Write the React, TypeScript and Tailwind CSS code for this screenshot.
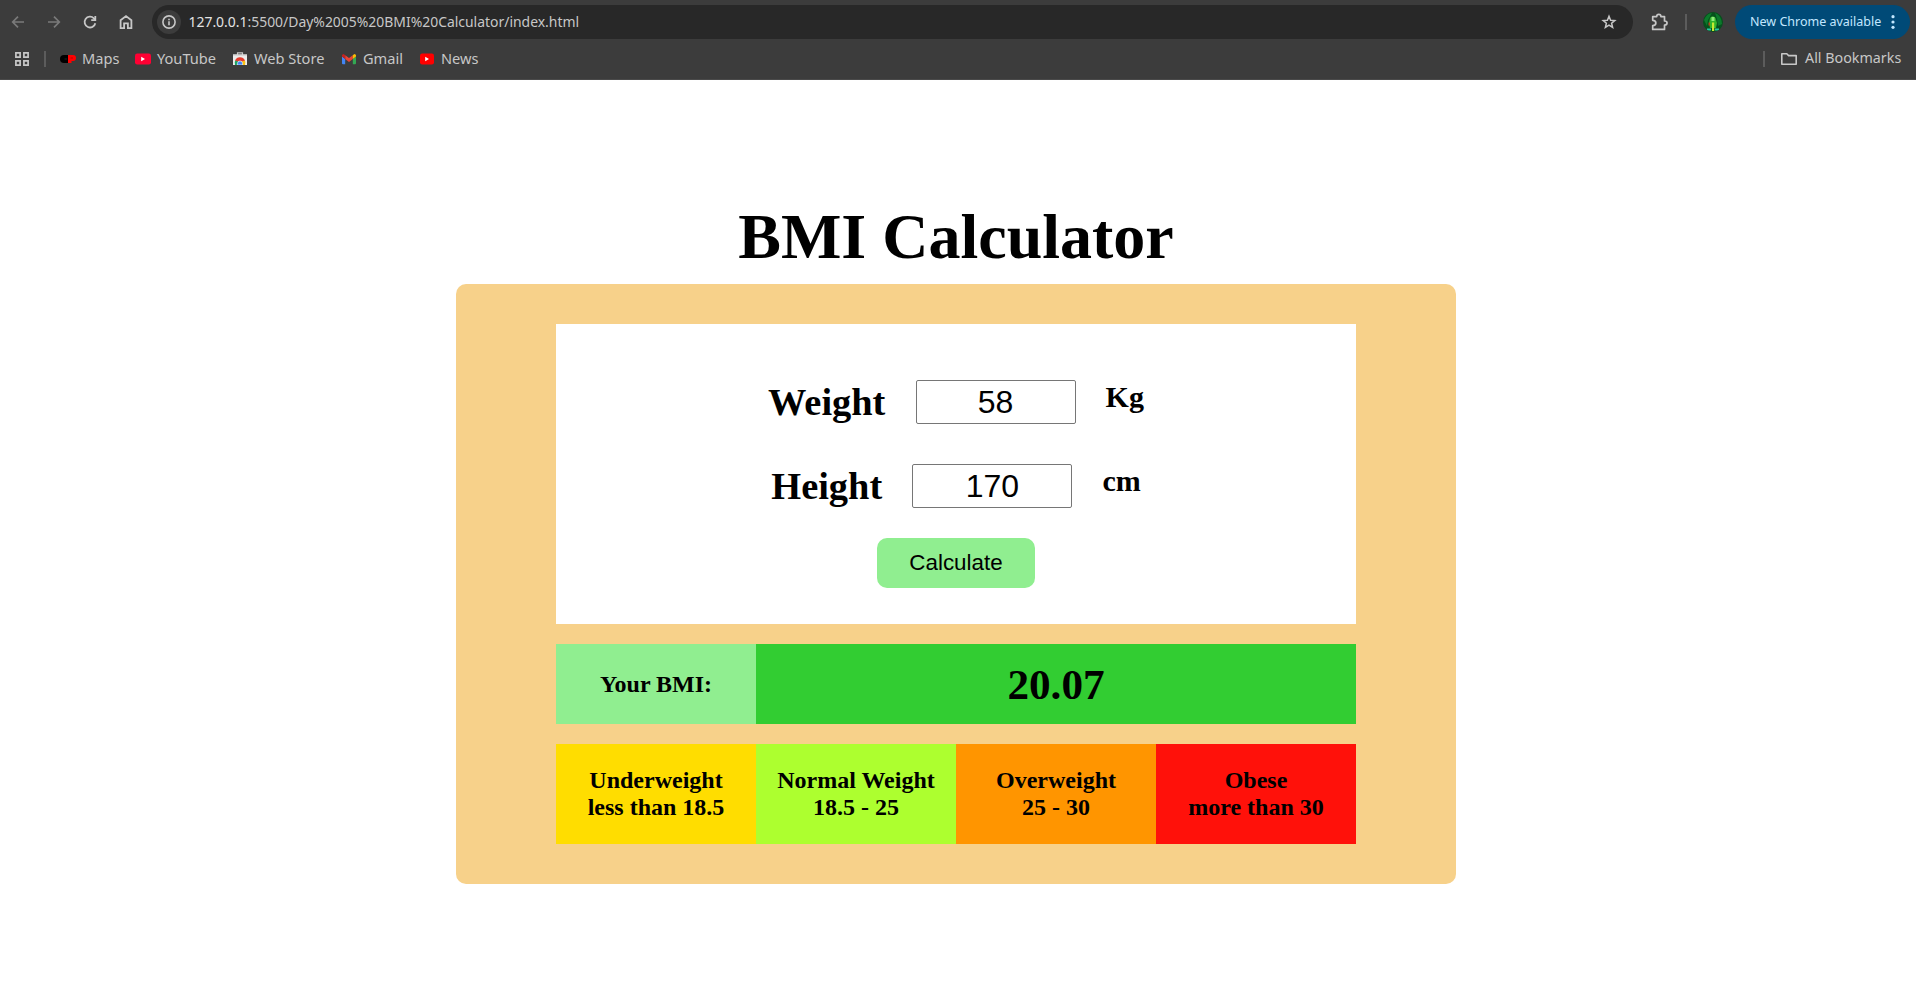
import type { ReactNode } from 'react';

function Stroke({ size, children, className = '', width = 1.7 }: { size: number; children: ReactNode; className?: string; width?: number }) {
  return (
    <svg width={size} height={size} viewBox={`0 0 ${size} ${size}`} fill="none" stroke="currentColor" strokeWidth={width} className={`shrink-0 ${className}`}>
      {children}
    </svg>
  );
}

function YouTubeIcon({ color, w = 16 }: { color: string; w?: number }) {
  return (
    <svg width="16" height="16" viewBox="0 0 16 16" className="shrink-0">
      <rect x={(16 - w) / 2} y="2.5" width={w} height="11" rx="2.2" fill={color} />
      <path d="M6.2 5.8v4.4L10 8z" fill="#fff" />
    </svg>
  );
}

function MapsIcon() {
  return (
    <svg width="16" height="16" viewBox="0 0 16 16" className="shrink-0">
      <path d="M4 4H8V12H4A4 4 0 0 1 4 4z" fill="#000" />
      <path d="M8 4H13A2.8 2.8 0 0 1 13 10H11.5V12H8z" fill="#f00" />
      <path d="M4.5 8H7" stroke="#2a2a2a" strokeWidth=".8" />
      <path d="M10.5 7H13" stroke="#a00" strokeWidth=".8" />
    </svg>
  );
}

function StoreIcon() {
  return (
    <svg width="16" height="16" viewBox="0 0 16 16" className="shrink-0">
      <path d="M5.5 4V1.8h5V4" fill="none" stroke="#c8c8c8" strokeWidth="1.2" />
      <path d="M1 3.5h14V14H1z" fill="#ececec" />
      <path d="M1 3.5h14v1.2H1z" fill="#d2d2d2" />
      <path d="M3 14A5 5 0 0 1 3.6 9L8 11v3z" fill="#1fa463" />
      <path d="M13 14A5 5 0 0 0 12.6 9L8 10v4z" fill="#fbc116" />
      <path d="M3 9.5A5.4 5.4 0 0 1 13 9.5L8 11z" fill="#e33b2e" />
      <path d="M5.4 14V12.6A2.6 2.6 0 0 1 10.6 12.6V14z" fill="#4285f4" stroke="#fff" strokeWidth=".6" />
      <path d="M1 14h14v2H1z" fill="#3c3c3c" />
    </svg>
  );
}

function GmailIcon() {
  return (
    <svg width="16" height="16" viewBox="0 0 16 16" className="shrink-0">
      <path d="M1 5.5L4.2 8V13.3H2a1 1 0 0 1-1-1z" fill="#4285f4" />
      <path d="M15 5.5L11.8 8V13.3H14a1 1 0 0 0 1-1z" fill="#34a853" />
      <path d="M4.2 4.2L8 7.1L11.8 4.2V8L8 10.9L4.2 8z" fill="#ea4335" />
      <path d="M1 4.2A1.4 1.4 0 0 1 3.3 3.4L4.2 4.2V8L1 5.6z" fill="#c5221f" />
      <path d="M15 4.2A1.4 1.4 0 0 0 12.7 3.4L11.8 4.2V8L15 5.6z" fill="#fbbc04" />
    </svg>
  );
}

function Avatar() {
  return (
    <svg width="20" height="20" viewBox="0 0 20 20" className="shrink-0">
      <defs>
        <clipPath id="avatar-clip"><circle cx="10" cy="10" r="10" /></clipPath>
      </defs>
      <g clipPath="url(#avatar-clip)">
        <rect width="20" height="20" fill="#06501c" />
        <path d="M1 8Q4 1 9 1L5 8L4 14zM12 1Q19 4 19 12L15 14L14 7z" fill="#0b7a2b" />
        <path d="M7 6Q9.5 2.5 12.5 6L14 11L13 16H7L6 11z" fill="#2fb32c" />
        <path d="M8.5 5h3v4h-3z" fill="#8eea78" />
        <path d="M5.5 10.5h1.5v3H5.5z" fill="#b4451c" />
        <path d="M9 10.5h2.2v8.5H9z" fill="#c5e832" />
        <path d="M4 16.5h4v2H4zM12 16.5h4v2H12z" fill="#25c9a0" />
      </g>
    </svg>
  );
}

function Bookmark({ icon, label, className }: { icon: ReactNode; label: string; className: string }) {
  return (
    <div className={`flex shrink-0 items-center gap-1.5 ${className}`}>
      {icon}
      <span className="pb-0.5">{label}</span>
    </div>
  );
}

function BrowserBar() {
  return (
    <header className="h-20 border-b border-[#4a4a4a] bg-[#3c3c3c] pt-[5px] font-['Noto_Sans',sans-serif] text-[#c7c7c7]">
      <div className="flex h-[34px] items-center pr-1.5 pl-[9px]">
        <div className="flex w-[143px] gap-[18px]">
          <Stroke size={18} className="text-[#7a7a7a]"><path d="M15 9H4M9 3.7L3.7 9L9 14.3" /></Stroke>
          <Stroke size={18} className="text-[#7a7a7a]"><path d="M3 9H14M9 3.7L14.3 9L9 14.3" /></Stroke>
          <Stroke size={18} width={1.8}>
            <path d="M14.3 10.2A5.4 5.4 0 1 1 12.9 5.3L14.2 6.6" />
            <path d="M14.3 3V7.1H10.2" />
          </Stroke>
          <Stroke size={18} width={1.8}><path d="M3.6 15.1V7.2L9 3.1L14.4 7.2V15.1H10.9V10.3H7.1V15.1z" /></Stroke>
        </div>
        <div className="flex h-[34px] w-[1481px] items-center rounded-full bg-[#282828] pr-4 pl-[5px]">
          <div className="flex size-6 items-center justify-center rounded-full bg-[#3c3c3c]">
            <Stroke size={16} width={1.6}>
              <circle cx="8" cy="8" r="6.1" />
              <path d="M8 7.3V11.2M8 4.8V6.2" />
            </Stroke>
          </div>
          <p className="ml-[7.5px] flex-1 text-[13.93px] leading-5 whitespace-nowrap">
            <span className="text-[#e3e3e3]">127.0.0.1</span>:5500/Day%2005%20BMI%20Calculator/index.html
          </p>
          <Stroke size={16} width={1.5}>
            <path d="M8 2.3L9.6 6.2L13.8 6.5L10.6 9.2L11.6 13.3L8 11.1L4.4 13.3L5.4 9.2L2.2 6.5L6.4 6.2z" />
          </Stroke>
        </div>
        <Stroke size={20} width={1.7} className="ml-4">
          <path strokeLinejoin="round" d="M3.7 4.6H7.7C7.7 1.6 11.9 1.6 11.9 4.6H15.5V9C18.9 9 18.9 13 15.5 13V17.4H3.7V13.5C7.9 13.3 7.9 8.6 3.7 8.3z" />
        </Stroke>
        <div className="ml-4 h-4 w-0.5 bg-[#5c5c5c]" />
        <div className="ml-4"><Avatar /></div>
        <div className="ml-3 flex h-[34px] w-[175px] items-center rounded-full bg-[#004a77] pl-[15px] text-[12.5px] text-[#c2e7ff]">
          <span className="w-[135px] whitespace-nowrap">New Chrome available</span>
          <svg width="16" height="16" viewBox="0 0 16 16" fill="currentColor">
            <circle cx="8" cy="2.7" r="1.6" /><circle cx="8" cy="8" r="1.6" /><circle cx="8" cy="13.3" r="1.6" />
          </svg>
        </div>
      </div>
      <div className="flex h-10 items-center pr-3.5 pl-[14px] text-[14.6px] leading-5">
        <Stroke size={16} width={1.7}>
          <path d="M1.9 1.9H6.1V6.1H1.9zM9.9 1.9H14.1V6.1H9.9zM1.9 9.9H6.1V14.1H1.9zM9.9 9.9H14.1V14.1H9.9z" />
        </Stroke>
        <div className="mr-3.5 ml-3.5 h-4 w-0.5 bg-[#5c5c5c]" />
        <Bookmark icon={<MapsIcon />} label="Maps" className="w-[75px]" />
        <Bookmark icon={<YouTubeIcon color="#ff0033" />} label="YouTube" className="w-[97px]" />
        <Bookmark icon={<StoreIcon />} label="Web Store" className="w-[109px]" />
        <Bookmark icon={<GmailIcon />} label="Gmail" className="w-[78px]" />
        <Bookmark icon={<YouTubeIcon color="#ff0000" w={14} />} label="News" className="flex-1" />
        <div className="mr-[15px] h-4 w-0.5 bg-[#5c5c5c]" />
        <Stroke size={18} width={1.6}>
          <path strokeLinejoin="round" d="M1.8 3.8H6.8L8.6 5.6H16.2V14.2H1.8z" />
        </Stroke>
        <span className="ml-[7px] w-[97px] pb-0.5 text-[14.3px] whitespace-nowrap">All Bookmarks</span>
      </div>
    </header>
  );
}

function Field({ label, unit, value }: { label: string; unit: string; value: string }) {
  return (
    <div className="flex h-11 items-start gap-[30px] font-bold">
      <label className="text-[38.4px] leading-[44px]">{label}</label>
      <input
        aria-label={label}
        defaultValue={value}
        className="ml-[0.2px] h-11 w-40 rounded-[2px] border border-[#767676] bg-white text-center font-['Liberation_Sans',sans-serif] text-[32px] font-normal"
      />
      <span className="text-[30px] leading-[34px]">{unit}</span>
    </div>
  );
}

const categories = [
  { name: 'Underweight', range: 'less than 18.5', color: 'bg-[#ffdd00]' },
  { name: 'Normal Weight', range: '18.5 - 25', color: 'bg-[#adff2f]' },
  { name: 'Overweight', range: '25 - 30', color: 'bg-[#ff9500]' },
  { name: 'Obese', range: 'more than 30', color: 'bg-[#ff110a]' },
];

export default function App() {
  return (
    <div className="h-[1004px] overflow-hidden bg-white">
      <BrowserBar />
      <main className="flex flex-col items-center pt-[120px] pr-1 font-['Liberation_Serif',serif] text-black">
        <h1 className="h-[84px] text-[64px] leading-[74px] font-bold">BMI Calculator</h1>
        <section className="flex h-[600px] w-[1000px] flex-col gap-5 rounded-[10px] bg-[#f7d18a] px-[100px] py-10">
          <div className="flex h-[300px] flex-col items-center bg-white pt-14">
            <div className="flex flex-col items-center gap-10">
              <Field label="Weight" unit="Kg" value="58" />
              <Field label="Height" unit="cm" value="170" />
            </div>
            <button className="mt-[30px] h-[50px] w-[158px] rounded-[10px] bg-[#90ee90] font-['Liberation_Sans',sans-serif] text-[22.4px]">
              Calculate
            </button>
          </div>
          <div className="flex h-20 font-bold">
            <div className="flex w-[200px] items-center justify-center bg-[#90ee90] text-[24px]">Your BMI:</div>
            <div className="flex flex-1 items-center justify-center bg-[#32cd32] pt-0.5 text-[43.2px]">20.07</div>
          </div>
          <div className="grid h-[100px] grid-cols-4 text-center text-[24px] leading-[27px] font-bold">
            {categories.map((c) => (
              <div key={c.name} className={`flex flex-col justify-center ${c.color}`}>
                <p>{c.name}</p>
                <p>{c.range}</p>
              </div>
            ))}
          </div>
        </section>
      </main>
    </div>
  );
}
